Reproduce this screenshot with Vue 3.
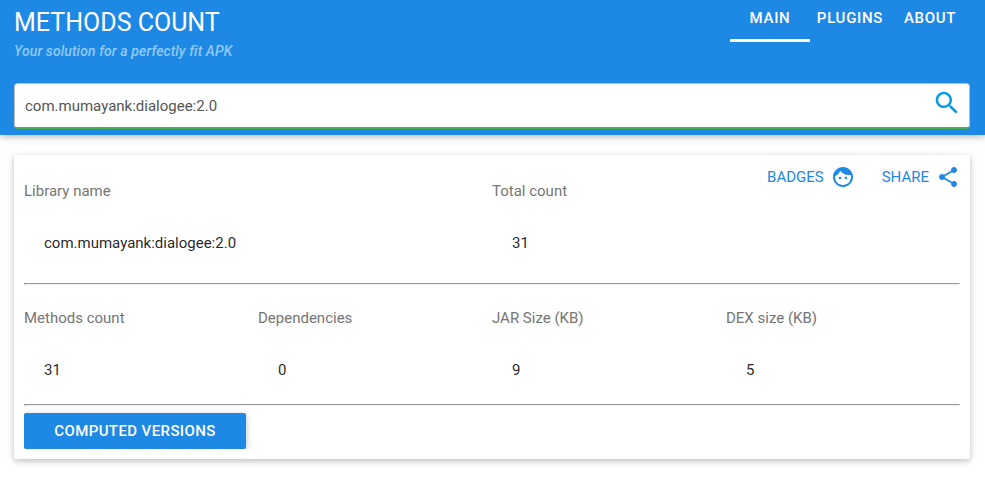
<script setup>
const tabs = [
  { label: 'MAIN', active: true },
  { label: 'PLUGINS', active: false },
  { label: 'ABOUT', active: false },
]
const summary = [
  { label: 'Library name', value: 'com.mumayank:dialogee:2.0' },
  { label: 'Total count', value: '31' },
]
const details = [
  { label: 'Methods count', value: '31' },
  { label: 'Dependencies', value: '0' },
  { label: 'JAR Size (KB)', value: '9' },
  { label: 'DEX size (KB)', value: '5' },
]
</script>

<template>
  <div class="page">
    <header class="header">
      <div class="top">
        <div class="brand">
          <h1 class="title">METHODS COUNT</h1>
          <p class="tagline">Your solution for a perfectly fit APK</p>
        </div>
        <nav class="tabs">
          <a v-for="t in tabs" :key="t.label" class="tab" :class="{ active: t.active }">{{ t.label }}</a>
        </nav>
      </div>
      <div class="search">
        <span class="query">com.mumayank:dialogee:2.0</span>
        <svg class="search-icon" viewBox="0 0 24 24"><path d="M15.5 14h-.79l-.28-.27C15.41 12.59 16 11.11 16 9.5 16 5.91 13.09 3 9.5 3S3 5.91 3 9.5 5.91 16 9.5 16c1.61 0 3.09-.59 4.23-1.57l.27.28v.79l5 4.99L20.49 19l-4.99-5zm-6 0C7.01 14 5 11.99 5 9.5S7.01 5 9.5 5 14 7.01 14 9.5 11.99 14 9.5 14z" /></svg>
      </div>
    </header>
    <main class="card">
      <div class="actions">
        <a class="action">
          <span>BADGES</span>
          <svg viewBox="0 0 24 24"><path d="M9 11.75c-.69 0-1.25.56-1.25 1.25s.56 1.25 1.25 1.25 1.25-.56 1.25-1.25-.56-1.25-1.25-1.25zm6 0c-.69 0-1.25.56-1.25 1.25s.56 1.25 1.25 1.25 1.25-.56 1.25-1.25-.56-1.25-1.25-1.25zM12 2C6.48 2 2 6.48 2 12s4.48 10 10 10 10-4.48 10-10S17.52 2 12 2zm0 18c-4.41 0-8-3.59-8-8 0-.29.02-.58.05-.86 2.36-1.05 4.23-2.98 5.21-5.37C11.07 8.33 14.05 10 17.42 10c.78 0 1.53-.09 2.25-.26.21.71.33 1.47.33 2.26 0 4.41-3.59 8-8 8z" /></svg>
        </a>
        <a class="action">
          <span>SHARE</span>
          <svg viewBox="0 0 24 24"><path d="M18 16.08c-.76 0-1.44.3-1.96.77L8.91 12.7c.05-.23.09-.46.09-.7s-.04-.47-.09-.7l7.05-4.11c.54.5 1.25.81 2.04.81 1.66 0 3-1.34 3-3s-1.34-3-3-3-3 1.34-3 3c0 .24.04.47.09.7L8.04 9.81C7.5 9.31 6.79 9 6 9c-1.66 0-3 1.34-3 3s1.34 3 3 3c.79 0 1.5-.31 2.04-.81l7.12 4.16c-.05.21-.08.43-.08.65 0 1.61 1.31 2.92 2.92 2.92s2.92-1.31 2.92-2.92-1.31-2.92-2.92-2.92z" /></svg>
        </a>
      </div>
      <section class="row summary">
        <div v-for="s in summary" :key="s.label" class="stat">
          <div class="label">{{ s.label }}</div>
          <div class="value">{{ s.value }}</div>
        </div>
      </section>
      <hr class="rule" />
      <section class="row details">
        <div v-for="s in details" :key="s.label" class="stat">
          <div class="label">{{ s.label }}</div>
          <div class="value">{{ s.value }}</div>
        </div>
      </section>
      <hr class="rule" />
      <div class="footer">
        <button class="button">COMPUTED VERSIONS</button>
      </div>
    </main>
  </div>
</template>

<style>
body {
  background: #fff;
}
</style>

<style scoped>
.page {
  height: 482px;
  overflow: hidden;
  font-family: Roboto, sans-serif;
  font-size: 15px;
  color: rgba(0, 0, 0, 0.87);
}
.header {
  box-sizing: border-box;
  height: 135px;
  padding: 0 15px 0 14px;
  background: #1e88e5;
  box-shadow: 0 2px 5px 0 rgba(0, 0, 0, 0.16), 0 2px 10px 0 rgba(0, 0, 0, 0.12);
}
.top {
  display: flex;
  justify-content: space-between;
  height: 83px;
}
.title {
  margin: 7px 0 0;
  font-size: 25px;
  line-height: 32px;
  font-weight: 400;
  color: #fff;
}
.tagline {
  margin: 2px 0 0;
  font-size: 14px;
  line-height: 20px;
  font-weight: 500;
  font-style: italic;
  letter-spacing: 0.1px;
  color: #90caf9;
}
.tabs {
  display: flex;
  height: 42px;
}
.tab {
  box-sizing: border-box;
  width: 80px;
  text-align: center;
  line-height: 36px;
  letter-spacing: 0.7px;
  font-size: 15px;
  font-weight: 500;
  color: #fff;
  border-bottom: 3px solid transparent;
}
.tab.active {
  border-bottom-color: #fff;
}
.search {
  box-sizing: border-box;
  display: flex;
  justify-content: space-between;
  height: 46px;
  padding: 0 7px 0 10px;
  background: #fff;
  border: 1px solid #bdbdbd;
  border-bottom: 2px solid #4caf50;
  border-radius: 4px;
}
.query {
  line-height: 44px;
  color: #555;
}
.search-icon {
  width: 30px;
  height: 30px;
  margin-top: 4px;
  fill: #039be5;
}
.card {
  box-sizing: border-box;
  height: 304px;
  margin: 20px 15px 0 14px;
  padding: 0 10px;
  position: relative;
  background: #fff;
  border-radius: 2px;
  box-shadow: 0 2px 5px 0 rgba(0, 0, 0, 0.16), 0 2px 10px 0 rgba(0, 0, 0, 0.12);
}
.actions {
  position: absolute;
  top: 10px;
  right: 10px;
  display: flex;
  gap: 27px;
}
.action {
  display: flex;
  gap: 7px;
  line-height: 24px;
  color: #1e88e5;
}
.action svg {
  width: 24px;
  height: 24px;
  fill: #1e88e5;
}
.row {
  box-sizing: border-box;
  display: grid;
}
.summary {
  grid-template-columns: repeat(2, 1fr);
  height: 128px;
  padding-top: 26px;
}
.details {
  grid-template-columns: repeat(4, 1fr);
  height: 119px;
  padding-top: 23px;
}
.label {
  line-height: 20px;
  color: #757575;
}
.value {
  padding: 32px 0 0 20px;
  line-height: 20px;
}
.rule {
  height: 0;
  margin: 0;
  border: 1px solid;
  border-color: #9a9a9a #eee #eee #9a9a9a;
}
.footer {
  height: 43px;
  padding-top: 7px;
  box-sizing: border-box;
  overflow: hidden;
}
.button {
  display: block;
  width: 222px;
  height: 36px;
  padding: 0;
  border: 0;
  border-radius: 2px;
  background: #1e88e5;
  box-shadow: 0 2px 5px 0 rgba(0, 0, 0, 0.16), 0 2px 10px 0 rgba(0, 0, 0, 0.12);
  color: #fff;
  font: 500 15px/36px Roboto, sans-serif;
  letter-spacing: 0.4px;
}
</style>
